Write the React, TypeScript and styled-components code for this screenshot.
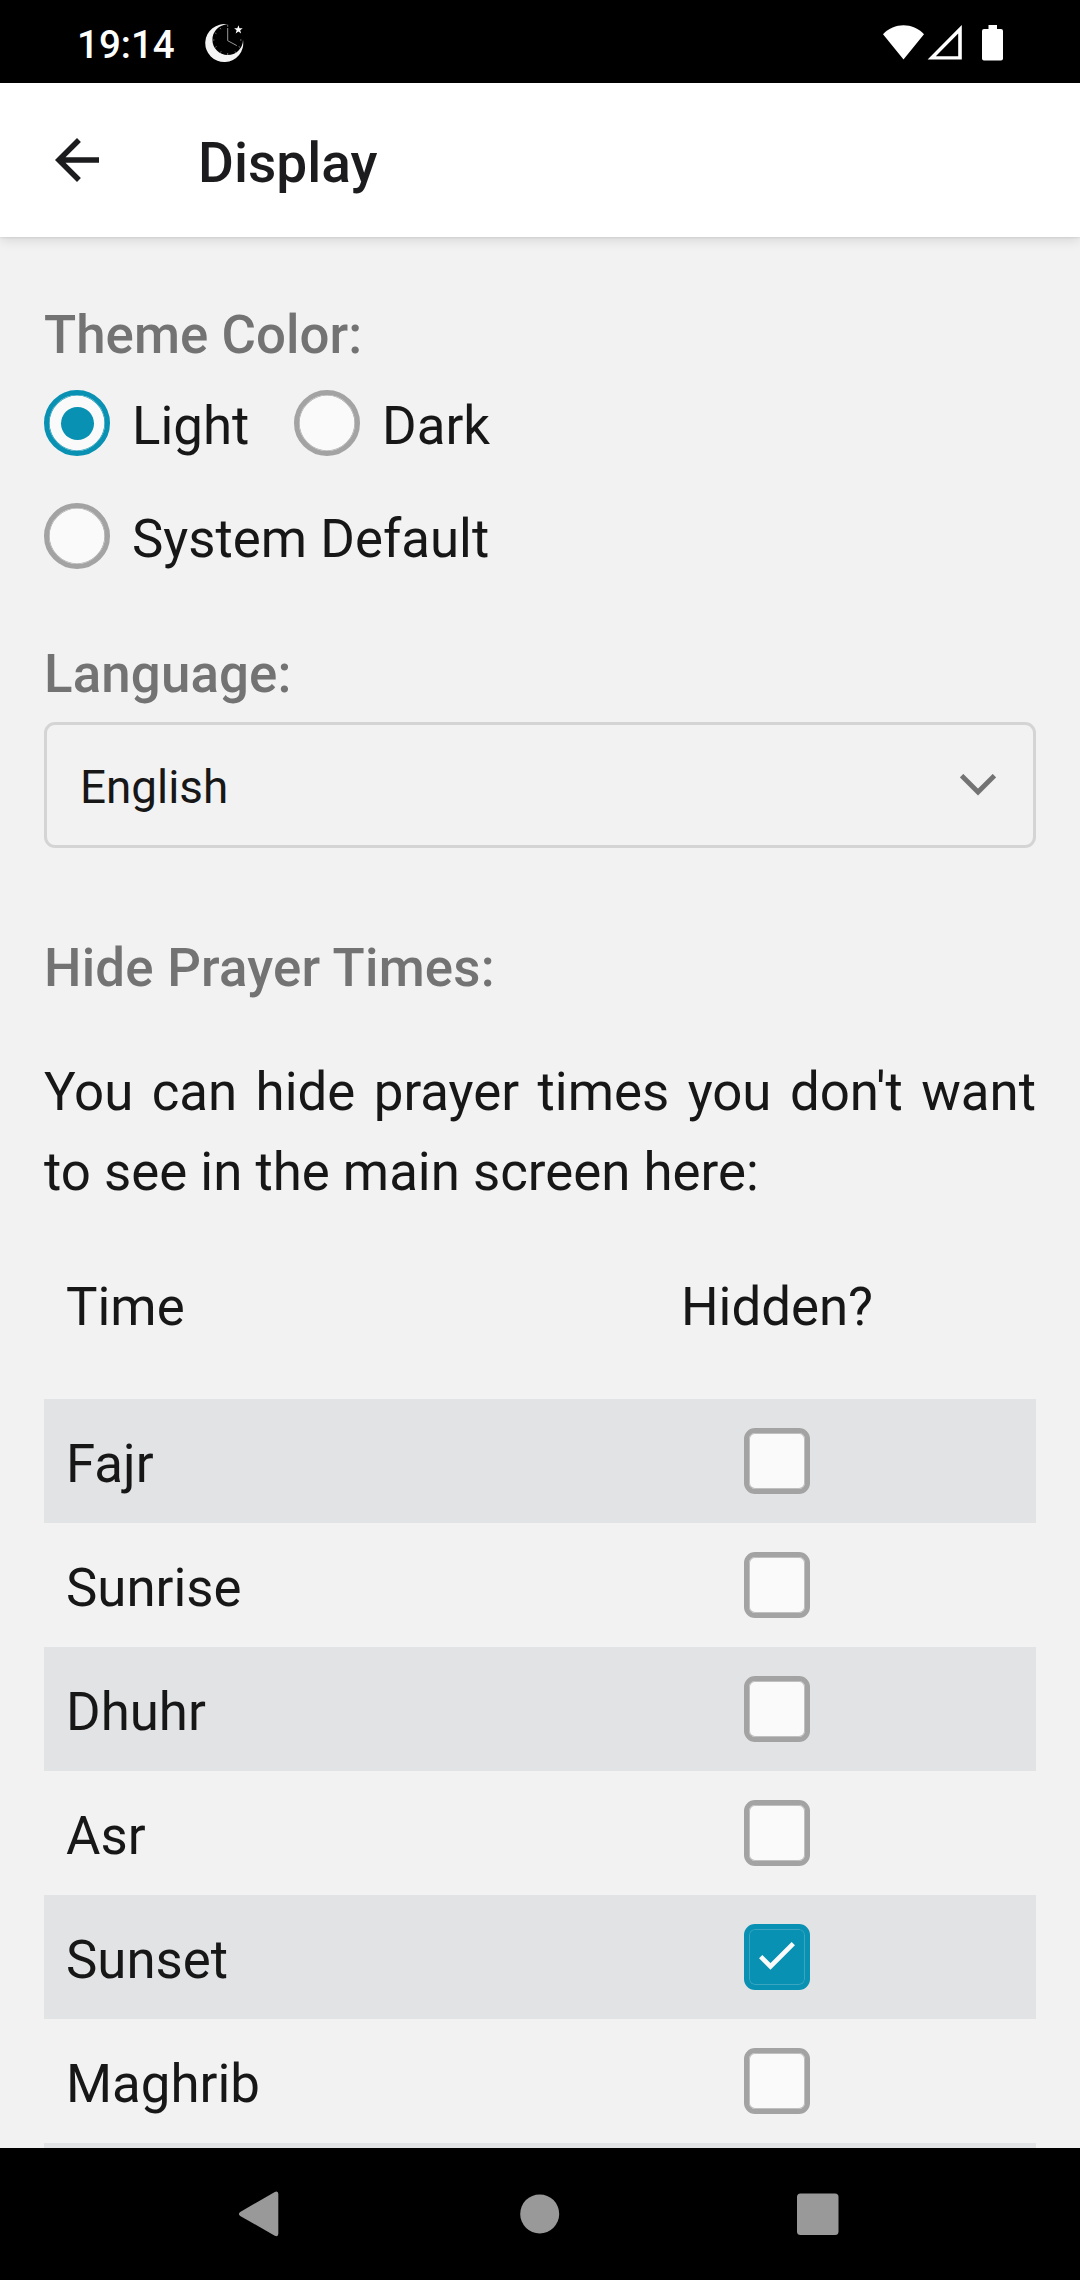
import React, { useState } from "react";
import styled, { createGlobalStyle } from "styled-components";

const GlobalStyle = createGlobalStyle`
  body {
    margin: 0;
    background: #f2f2f2;
  }
  * {
    box-sizing: border-box;
  }
`;

const Screen = styled.div`
  display: flex;
  flex-direction: column;
  width: 1080px;
  height: 2280px;
  overflow: hidden;
  background: #f2f2f2;
  color: #171717;
  font-family: Roboto, "Liberation Sans", sans-serif;
  font-size: 52.8px;
  line-height: 80px;
`;

const StatusBar = styled.div`
  display: flex;
  flex: none;
  align-items: center;
  height: 83px;
  padding: 3px 77px 0 77px;
  background: #000;
  color: #fff;
`;

const Clock = styled.span`
  width: 127px;
  font-size: 38.5px;
  font-weight: 500;
  line-height: 48px;
  padding-top: 4px;
`;

const StatusIcons = styled.div`
  display: flex;
  align-items: center;
  margin-left: auto;
`;

const AppBar = styled.header`
  display: flex;
  flex: none;
  align-items: center;
  gap: 88px;
  height: 154px;
  padding: 0 44px;
  background: #fff;
  color: #1c1c1e;
  box-shadow: 0 0 3px rgba(0, 0, 0, 0.14), 0 4px 11px rgba(0, 0, 0, 0.1);
  z-index: 1;
`;

const Title = styled.h1`
  margin: 0;
  padding-top: 6px;
  font-size: 55px;
  font-weight: 500;
  line-height: 64px;
`;

const Content = styled.main`
  display: flex;
  flex: 1;
  flex-direction: column;
  min-height: 0;
  overflow: hidden;
  padding: 58px 44px 0;
`;

const Label = styled.h2<{ $tracking?: number }>`
  flex: none;
  margin: 0;
  color: #737373;
  font-size: 52.8px;
  font-weight: 500;
  letter-spacing: ${(p) => p.$tracking ?? 0.05}px;
  line-height: 80px;
`;

const RadioGroup = styled.div`
  display: flex;
  flex: none;
  flex-wrap: wrap;
  column-gap: 44.8px;
  row-gap: 33px;
  margin: 8px 0 58px;
  padding-right: 88px;
`;

const RadioOption = styled.label`
  display: flex;
  align-items: center;
  gap: 22px;
  height: 80px;
`;

const RadioCircle = styled.span<{ $on: boolean }>`
  display: flex;
  align-items: center;
  justify-content: center;
  width: 66px;
  height: 66px;
  border: 5px solid ${(p) => (p.$on ? "#0891b2" : "#a3a3a3")};
  border-radius: 50%;
  background: #fafafa;
  box-shadow: inset 0 0 0 0.6px ${(p) => (p.$on ? "#0891b2" : "#a3a3a3")};
`;

const RadioDot = styled.span`
  width: 33px;
  height: 33px;
  border-radius: 50%;
  background: #0891b2;
`;

const OptionText = styled.span`
  padding-top: 6px;
`;

const SelectBox = styled.div`
  display: flex;
  flex: none;
  align-items: center;
  justify-content: space-between;
  height: 126px;
  margin: 8px 0 80px;
  padding: 0 37px 0 33px;
  border: 3px solid #d4d4d4;
  border-radius: 11px;
  font-size: 45.8px;
`;

const SelectValue = styled.span`
  padding-top: 6px;
`;

const Hint = styled.p`
  flex: none;
  margin: 44px 0 55px;
  text-align: justify;
`;

const Table = styled.div`
  display: flex;
  flex: none;
  flex-direction: column;
`;

const Row = styled.div<{ $striped?: boolean; $head?: boolean }>`
  display: grid;
  grid-template-columns: 1fr 1fr;
  align-items: center;
  height: ${(p) => (p.$head ? 132 : 124)}px;
  padding-bottom: ${(p) => (p.$head ? 52 : 0)}px;
  background: ${(p) => (p.$striped ? "#e2e3e5" : "transparent")};
`;

const NameCell = styled.div<{ $head?: boolean }>`
  padding: ${(p) => (p.$head ? 0 : 6)}px 22px 0;
`;

const CheckCell = styled.div`
  display: flex;
  justify-content: center;
  padding-right: 22px;
`;

const Box = styled.button<{ $on: boolean }>`
  display: flex;
  align-items: center;
  justify-content: center;
  width: 66px;
  height: 66px;
  padding: 0 0 2px;
  border: 5px solid ${(p) => (p.$on ? "#0891b2" : "#a3a3a3")};
  border-radius: 11px;
  background: ${(p) => (p.$on ? "#0891b2" : "#fafafa")};
  box-shadow: inset 0 0 0 1px ${(p) => (p.$on ? "#3ba4bf" : "#c0c0c0")};
`;

const NavBar = styled.nav`
  display: flex;
  flex: none;
  align-items: center;
  justify-content: space-between;
  height: 132px;
  padding: 0 241px 0 238px;
  background: #000;
`;

const MoonClockIcon = () => (
  <svg width="40" height="40" viewBox="204 23 40 40">
    <path
      d="M227.5 24.4 A19 19 0 1 0 243 40 A15.3 15.3 0 1 1 227.5 24.4 Z"
      fill="#f4f4f4"
    />
    <path
      d="M227.7 28 V40.7 L236.8 45.6"
      fill="none"
      stroke="#aaa"
      strokeWidth="0.9"
    />
    <path
      d="M227.7 24.6v2.2M227.7 53v2M235 51.5l.8 1.3M240 47.3l-1.3-.7M241.5 40h-1.5M220 28l.8 1.2M215.2 33l1.2.6M212.6 40h1.8M215.3 47.3l1.3-.8M220.5 52.5l.7-1.2"
      stroke="#aaa"
      strokeWidth="0.7"
    />
    <path
      d="M238.4 25.2l1.1 3 3.2.1-2.5 2 .9 3.1-2.7-1.8-2.7 1.8.9-3.1-2.5-2 3.2-.1z"
      fill="#fff"
    />
  </svg>
);

const WifiIcon = () => (
  <svg width="41" height="36" viewBox="0 0 41 36">
    <path d="M0 9.2 C11.5 -2.6 29.5 -2.6 41 9.2 L20.5 34.5 Z" fill="#fff" />
  </svg>
);

const SignalIcon = () => (
  <svg width="38" height="36" viewBox="0 0 38 36">
    <path
      d="M37.8 0 V34.6 H3.6 Z M34.2 8.6 L11.8 31.2 H34.2 Z"
      fill="#fff"
      fillRule="evenodd"
    />
  </svg>
);

const BatteryIcon = () => (
  <svg width="41" height="36" viewBox="0 0 41 36">
    <path
      d="M26.5 0h8.5v4h4q2 0 2 2v27.6q0 2-2 2H22q-2 0-2-2V6q0-2 2-2h4.5z"
      fill="#fff"
    />
  </svg>
);

const BackIcon = () => (
  <svg width="66" height="66" viewBox="0 0 24 24" fill="currentColor">
    <path d="M20 11H7.83l5.59-5.59L12 4l-8 8 8 8 1.41-1.41L7.83 13H20v-2z" />
  </svg>
);

const ChevronIcon = () => (
  <svg width="36" height="22" viewBox="0 0 36 22">
    <path
      d="M1.6 1.6 L18 18 L34.4 1.6"
      fill="none"
      stroke="#737373"
      strokeWidth="4.8"
    />
  </svg>
);

const TickIcon = () => (
  <svg width="36" height="28" viewBox="0 0 36 28">
    <path
      d="M1.7 14.6 L11.5 24.4 L34.3 1.7"
      fill="none"
      stroke="#fafafa"
      strokeWidth="4.7"
    />
  </svg>
);

const NavBack = () => (
  <svg width="42" height="46" viewBox="0 0 42 46">
    <path
      d="M2.2 20.9 L36.8 0.9 Q40.3 -0.6 40.3 3 V42.6 Q40.3 46.2 36.8 44.7 L2.2 24.9 Q-0.4 22.9 2.2 20.9 Z"
      fill="#999"
    />
  </svg>
);

const NavHome = () => (
  <svg width="43" height="42" viewBox="0 0 43 42">
    <circle cx="22.7" cy="20.9" r="19.5" fill="#999" />
  </svg>
);

const NavRecent = () => (
  <svg width="42" height="42" viewBox="0 0 42 42">
    <rect y="0.5" width="41.5" height="41.5" rx="3.5" fill="#999" />
  </svg>
);

const themes = ["Light", "Dark", "System Default"];
const times = ["Fajr", "Sunrise", "Dhuhr", "Asr", "Sunset", "Maghrib", ""];

export default function App() {
  const [theme, setTheme] = useState("Light");
  const [hidden, setHidden] = useState<string[]>(["Sunset"]);

  const toggle = (name: string) =>
    setHidden((list) =>
      list.includes(name) ? list.filter((n) => n !== name) : [...list, name]
    );

  return (
    <Screen>
      <GlobalStyle />
      <StatusBar>
        <Clock>19:14</Clock>
        <MoonClockIcon />
        <StatusIcons>
          <WifiIcon />
          <SignalIcon />
          <BatteryIcon />
        </StatusIcons>
      </StatusBar>
      <AppBar>
        <BackIcon />
        <Title>Display</Title>
      </AppBar>
      <Content>
        <Label>Theme Color:</Label>
        <RadioGroup>
          {themes.map((name) => (
            <RadioOption key={name} onClick={() => setTheme(name)}>
              <RadioCircle $on={theme === name}>
                {theme === name && <RadioDot />}
              </RadioCircle>
              <OptionText>{name}</OptionText>
            </RadioOption>
          ))}
        </RadioGroup>
        <Label $tracking={0.15}>Language:</Label>
        <SelectBox>
          <SelectValue>English</SelectValue>
          <ChevronIcon />
        </SelectBox>
        <Label $tracking={0.22}>Hide Prayer Times:</Label>
        <Hint>
          You can hide prayer times you don't want to see in the main screen
          here:
        </Hint>
        <Table>
          <Row $head>
            <NameCell $head>Time</NameCell>
            <CheckCell>Hidden?</CheckCell>
          </Row>
          {times.map((name, i) => (
            <Row key={name} $striped={i % 2 === 0}>
              <NameCell>{name}</NameCell>
              <CheckCell>
                <Box
                  $on={hidden.includes(name)}
                  onClick={() => toggle(name)}
                >
                  {hidden.includes(name) && <TickIcon />}
                </Box>
              </CheckCell>
            </Row>
          ))}
        </Table>
      </Content>
      <NavBar>
        <NavBack />
        <NavHome />
        <NavRecent />
      </NavBar>
    </Screen>
  );
}
